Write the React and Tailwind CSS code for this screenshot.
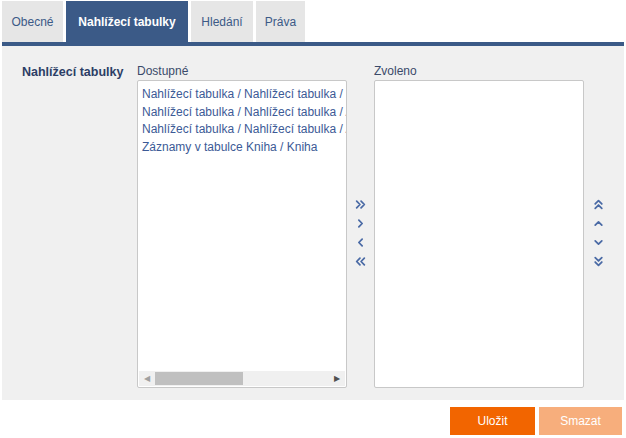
import React from 'react';

const tabs = [
  { label: 'Obecné', w: 'w-[61px]' },
  { label: 'Nahlížecí tabulky', w: 'w-[122px]' },
  { label: 'Hledání', w: 'w-[62px]' },
  { label: 'Práva', w: 'w-[49px]' },
];

const items = [
  'Nahlížecí tabulka / Nahlížecí tabulka / Nahlížecí tabulka',
  'Nahlížecí tabulka / Nahlížecí tabulka / Autor',
  'Nahlížecí tabulka / Nahlížecí tabulka / Autor',
  'Záznamy v tabulce Kniha / Kniha',
];

const Chevron = ({ d }) => (
  <svg width="11" height="11" viewBox="0 0 10 10" fill="none" stroke="#4a6aa5" strokeWidth="1.6" strokeLinecap="round" strokeLinejoin="round">
    <path d={d} />
  </svg>
);

const App = () => {
  return (
    <div className="w-[626px] h-[438px] bg-white text-[12px]" style={{ fontFamily: 'Tahoma, "Liberation Sans", Arial, sans-serif' }}>
      {/* tabs */}
      <div className="flex pl-[2px] pt-[1px] h-[42px]">
        {tabs.map((t, i) => (
          <div
            key={t.label}
            className={`${t.w} h-[41px] flex items-center justify-center mr-[3px] ${
              i === 1 ? 'bg-[#3b5a87] text-white font-bold' : 'bg-[#e6e6e6] text-[#3c5a87]'
            }`}
          >
            {t.label}
          </div>
        ))}
      </div>
      <div className="mx-[2px] h-[4px] bg-[#3b5a87]" />

      {/* panel */}
      <div className="mx-[2px] h-[354px] bg-[#f0f0f0] flex pt-[17px]">
        <div className="w-[135px] pl-[20px] font-bold text-[12.5px] text-[#2c3e66] whitespace-nowrap">Nahlížecí tabulky</div>

        <div className="flex flex-col">
          <div className="text-[#3a4a6a] h-[17px] leading-[17px]">Dostupné</div>
          <div className="w-[210px] h-[308px] bg-white border border-[#c8c8c8] rounded-[2px] flex flex-col">
            <div className="flex-1 overflow-hidden pt-[5px] pl-[4px]">
              {items.map((it, i) => (
                <div key={i} className="whitespace-nowrap text-[#3c5a96] leading-[17.5px]">
                  {it}
                </div>
              ))}
            </div>
            <div className="h-[15px] mx-[1px] mb-[1px] bg-[#f0f0f0] flex items-center">
              <span className="w-[16px] flex justify-center text-[#a0a0a0] text-[8px]">◀</span>
              <div className="w-[88px] h-[13px] bg-[#c0c0c0]" />
              <div className="flex-1" />
              <span className="w-[16px] flex justify-center text-[#505050] text-[8px]">▶</span>
            </div>
          </div>
        </div>

        <div className="w-[27px] flex flex-col items-center justify-center gap-[8px] pt-[2px]">
          <Chevron d="M1.5 2 L4.5 5 L1.5 8 M5.5 2 L8.5 5 L5.5 8" />
          <Chevron d="M3.5 2 L6.5 5 L3.5 8" />
          <Chevron d="M6.5 2 L3.5 5 L6.5 8" />
          <Chevron d="M4.5 2 L1.5 5 L4.5 8 M8.5 2 L5.5 5 L8.5 8" />
        </div>

        <div className="flex flex-col">
          <div className="text-[#3a4a6a] h-[17px] leading-[17px]">Zvoleno</div>
          <div className="w-[210px] h-[308px] bg-white border border-[#c8c8c8] rounded-[2px]" />
        </div>

        <div className="w-[28px] flex flex-col items-center justify-center gap-[8px] pt-[2px]">
          <Chevron d="M2 4.5 L5 1.5 L8 4.5 M2 8.5 L5 5.5 L8 8.5" />
          <Chevron d="M2 6.5 L5 3.5 L8 6.5" />
          <Chevron d="M2 3.5 L5 6.5 L8 3.5" />
          <Chevron d="M2 1.5 L5 4.5 L8 1.5 M2 5.5 L5 8.5 L8 5.5" />
        </div>
      </div>

      {/* actions */}
      <div className="flex justify-end gap-[4px] pr-[4px] pt-[7px]">
        <button className="w-[85px] h-[28px] bg-[#f26500] text-white">Uložit</button>
        <button className="w-[83px] h-[28px] bg-[#f7ae7c] text-white">Smazat</button>
      </div>
    </div>
  );
};

export default App;
